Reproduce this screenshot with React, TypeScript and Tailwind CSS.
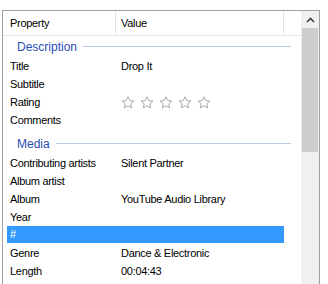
import React from "react";

const font = { fontFamily: '"Liberation Sans", Arial, sans-serif' };

function Star() {
  return (
    <svg width="14" height="13" viewBox="0 0 14 13" className="shrink-0">
      <path
        d="M7 0.8 L8.75 4.6 L12.9 5.0 L9.8 7.8 L10.7 11.9 L7 9.8 L3.3 11.9 L4.2 7.8 L1.1 5.0 L5.25 4.6 Z"
        fill="#ffffff"
        stroke="#a8a8a8"
        strokeWidth="1"
        strokeLinejoin="round"
      />
    </svg>
  );
}

function Row({ label, value, children }: { label: string; value?: string; children?: React.ReactNode }) {
  return (
    <div className="flex h-[18px] items-center text-[11px] tracking-[-0.3px] text-black">
      <div className="w-[118px] shrink-0 pl-[7px] whitespace-nowrap">{label}</div>
      <div className="flex-1 whitespace-nowrap">{children ?? value}</div>
    </div>
  );
}

function Group({ title, className }: { title: string; className?: string }) {
  return (
    <div className={"flex h-[21px] items-center pl-[14px] pr-[10px] " + (className ?? "")}>
      <span className="text-[12px] leading-none text-[#2a4db5]">{title}</span>
      <div className="ml-[6px] h-px flex-1 bg-[#bccbe6]" />
    </div>
  );
}

export default function App() {
  return (
    <div className="w-[328px] h-[284px] overflow-hidden bg-white" style={font}>
      <div className="ml-[2px] mt-[10px] flex h-[274px] w-[318px] border border-b-0 border-[#a0a0a0]">
        <div className="flex w-[298px] flex-col">
          <div className="flex h-[25px] shrink-0 border-b border-[#e5e5e5] text-[11px] tracking-[-0.3px] text-black">
            <div className="flex w-[113px] items-center border-r border-[#e5e5e5] pl-[7px]">Property</div>
            <div className="flex w-[168px] items-center border-r border-[#e5e5e5] pl-[5px]">Value</div>
            <div className="flex-1" />
          </div>
          <Group title="Description" />
          <Row label="Title" value="Drop It" />
          <Row label="Subtitle" />
          <Row label="Rating">
            <div className="flex gap-[5px] pt-[1px]">
              <Star />
              <Star />
              <Star />
              <Star />
              <Star />
            </div>
          </Row>
          <Row label="Comments" />
          <Group title="Media" className="mt-[4px]" />
          <Row label="Contributing artists" value="Silent Partner" />
          <Row label="Album artist" />
          <Row label="Album" value="YouTube Audio Library" />
          <Row label="Year" />
          <div className="h-[18px]">
            <div className="ml-[4px] flex h-[17px] w-[277px] items-center border border-[#3399ff] bg-[#3399ff] pl-[2px] text-[11px] tracking-[-0.3px] text-white">
              #
            </div>
          </div>
          <Row label="Genre" value="Dance & Electronic" />
          <Row label="Length" value="00:04:43" />
        </div>
        <div className="flex w-[18px] flex-col bg-[#f0f0f0]">
          <div className="flex h-[17px] items-center justify-center">
            <svg width="9" height="6" viewBox="0 0 9 6">
              <path d="M1 5 L4.5 1.5 L8 5" fill="none" stroke="#404040" strokeWidth="1.6" />
            </svg>
          </div>
          <div className="mx-[1px] h-[124px] bg-[#cdcdcd]" />
        </div>
      </div>
    </div>
  );
}
